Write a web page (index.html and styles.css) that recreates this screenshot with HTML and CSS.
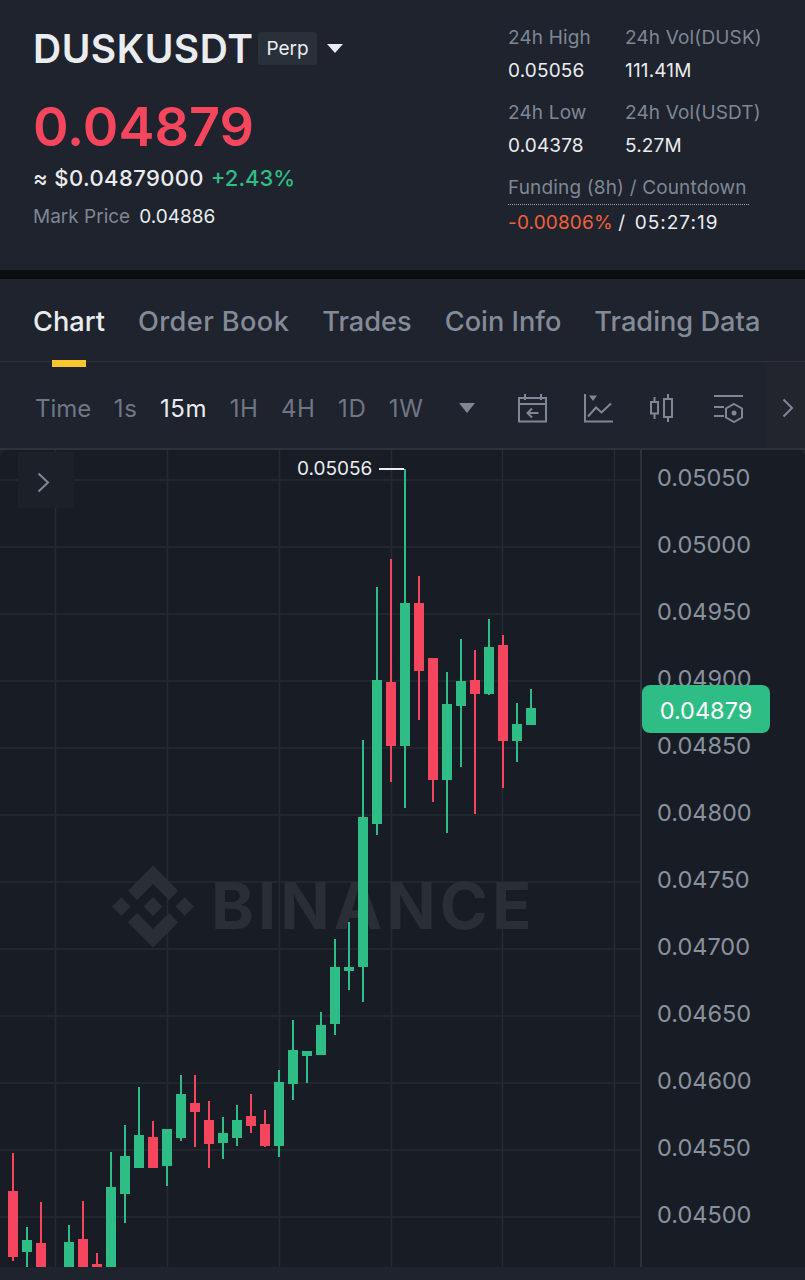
FILE: index.html
```html
<!DOCTYPE html>
<html lang="en">
<head>
  <meta charset="UTF-8" />
  <title>DUSKUSDT Perp</title>
  <link rel="stylesheet" href="styles.css">
</head>
<body>
  <header class="ticker">
    <div class="ticker-main">
      <div class="symbol-row">
        <span class="symbol">DUSKUSDT</span>
        <span class="perp">Perp</span>
        <span class="symbol-caret"></span>
      </div>
      <div class="last-price">0.04879</div>
      <div class="fiat-row"><span class="fiat">≈ $0.04879000</span> <span class="change">+2.43%</span></div>
      <div class="mark-row"><span class="muted">Mark Price</span><span>0.04886</span></div>
    </div>
    <div class="ticker-stats">
      <div class="stat-grid">
        <div class="stat"><div class="muted">24h High</div><div>0.05056</div></div>
        <div class="stat"><div class="muted">24h Vol(DUSK)</div><div>111.41M</div></div>
        <div class="stat"><div class="muted">24h Low</div><div>0.04378</div></div>
        <div class="stat"><div class="muted">24h Vol(USDT)</div><div>5.27M</div></div>
      </div>
      <div class="funding-label muted">Funding (8h) / Countdown</div>
      <div class="funding-value"><span class="funding-rate">-0.00806%</span> / <span class="funding-time">05:27:19</span></div>
    </div>
  </header>

  <nav class="tabs">
    <a class="tab active">Chart</a>
    <a class="tab">Order Book</a>
    <a class="tab">Trades</a>
    <a class="tab">Coin Info</a>
    <a class="tab">Trading Data</a>
  </nav>

  <div class="toolbar">
    <div class="intervals">
      <span>Time</span>
      <span>1s</span>
      <span class="current">15m</span>
      <span>1H</span>
      <span>4H</span>
      <span>1D</span>
      <span>1W</span>
    </div>
    <span class="interval-caret"></span>
    <div class="tools">
      <svg width="30" height="30" viewBox="0 0 30 30" class="tool">
        <rect x="1" y="5" width="27" height="23.5" />
        <path d="M1 11h27M7 1v6M23 1v6M20.5 20h-11M14 15.5 9.5 20l4.5 4.5" />
      </svg>
      <svg width="30" height="30" viewBox="0 0 30 30" class="tool">
        <path d="M2 1v27.5h28M5 23.5l8-9 5.5 5 9.500-9" />
        <path class="tool-fill" d="M6 2.500h8l-4 5.500z" />
      </svg>
      <svg width="30" height="30" viewBox="0 0 30 30" class="tool">
        <rect x="3" y="9" width="7" height="11.500" />
        <rect x="16" y="6" width="8" height="18" />
        <path d="M6.500 4v5M6.500 20.500V26M20 1v5M20 24v5" />
      </svg>
      <svg width="30" height="30" viewBox="0 0 30 30" class="tool">
        <path d="M1 3h29M1 14h10M1 23h10" />
        <path d="M21 11l8 4.500v9L21 29l-8-4.500v-9z" />
        <circle class="tool-fill" cx="21" cy="20" r="2.500" />
      </svg>
    </div>
    <div class="tools-more">
      <svg width="12" height="20" viewBox="0 0 12 20" class="tool">
        <path d="M1.500 1.500 10 10l-8.500 8.500" />
      </svg>
    </div>
  </div>

  <section class="chart">
    <svg class="plot" width="640" height="817" viewBox="0 450 640 817">
      <g id="grid"></g>
      <g class="watermark">
        <g transform="translate(112 865.500) scale(0.648)">
          <path d="M38.730 53.200l24.590-24.580 24.600 24.600 14.300-14.310L63.320 0 24.430 38.900z" />
          <path d="M0 63.310l14.300-14.310 14.310 14.310-14.310 14.300z" />
          <path d="M38.730 73.410L63.320 98l24.600-24.600 14.310 14.290-38.900 38.910-38.910-38.880z" />
          <path d="M98 63.310l14.300-14.310 14.310 14.300-14.310 14.320z" />
          <path d="M77.830 63.300L63.320 48.780 48.810 63.280l14.510 14.500z" />
        </g>
        <text x="211" y="929">BINANCE</text>
      </g>
      <g id="candles"></g>
    </svg>

    <div class="axis">
      <span>0.05050</span>
      <span>0.05000</span>
      <span>0.04950</span>
      <span>0.04900</span>
      <span>0.04850</span>
      <span>0.04800</span>
      <span>0.04750</span>
      <span>0.04700</span>
      <span>0.04650</span>
      <span>0.04600</span>
      <span>0.04550</span>
      <span>0.04500</span>
    </div>

    <button class="drawer-toggle">
      <svg width="13" height="21" viewBox="0 0 13 21" class="tool">
        <path d="M1.500 1.500 11 10.500l-9.500 9" />
      </svg>
    </button>
    <div class="high-mark">0.05056<span class="high-line"></span></div>
    <div class="price-tag">0.04879</div>
  </section>

  <script src="chart.js"></script>
</body>
</html>
```

FILE: styles.css
```css
body {
  margin: 0;
  height: 1280px;
  overflow: hidden;
  font-family: Inter, "Liberation Sans", sans-serif;
  background-color: #1e232d;
  color: #eaecef;
}

.muted {
  color: #7f8794;
}

/* ticker header */
.ticker {
  display: flex;
  justify-content: space-between;
  height: 270px;
  box-sizing: border-box;
  padding: 0 44px 0 33px;
}

.symbol-row {
  display: flex;
  align-items: center;
  margin-top: 29px;
  height: 38px;
}

.symbol {
  font-size: 39px;
  font-weight: 600;
  letter-spacing: 0.5px;
}

.perp {
  margin-left: 5px;
  padding: 0 8px;
  height: 33px;
  line-height: 33px;
  font-size: 19px;
  background-color: #2a303a;
  border-radius: 3px;
}

.symbol-caret {
  margin-left: 10px;
  border-left: 8px solid transparent;
  border-right: 8px solid transparent;
  border-top: 9px solid #eaecef;
}

.last-price {
  margin-top: 27px;
  font-size: 54px;
  line-height: 66px;
  font-weight: 600;
  color: #f6465d;
}

.fiat-row {
  margin-top: 3px;
  font-size: 22px;
  line-height: 30px;
  font-weight: 500;
}

.fiat {
  letter-spacing: 0.4px;
}

.change {
  margin-left: 1px;
  color: #2ebd85;
}

.mark-row {
  display: flex;
  gap: 9px;
  margin-top: 11px;
  font-size: 19px;
  line-height: 26px;
}

.ticker-stats {
  width: 253px;
  padding-top: 25px;
  font-size: 19px;
  line-height: 26px;
  letter-spacing: 0.15px;
  white-space: nowrap;
}

.stat-grid {
  display: grid;
  grid-template-columns: 117px 136px;
  row-gap: 16px;
}

.stat div + div {
  margin-top: 7px;
}

.funding-label {
  margin-top: 16px;
  width: 241px;
  padding-bottom: 3px;
  border-bottom: 1px dotted #a0a6b0;
}

.funding-value {
  margin-top: 5px;
}

.funding-rate {
  color: #f0603c;
}

.funding-time {
  margin-left: 4px;
  letter-spacing: 1px;
}

/* tabs */
.tabs {
  display: flex;
  gap: 33px;
  height: 83px;
  box-sizing: border-box;
  margin-top: 9px;
  padding: 0 33px;
  border-bottom: 1px solid #2d323c;
}

.ticker + .tabs {
  box-shadow: 0 -9px 0 #0b0e11;
}

.tab {
  position: relative;
  font-size: 27.2px;
  font-weight: 500;
  line-height: 86px;
  color: #848b98;
  white-space: nowrap;
}

.tab:nth-child(2) {
  letter-spacing: 0.4px;
}

.tab.active {
  color: #eaecef;
}

.tab.active::after {
  content: "";
  position: absolute;
  left: 19px;
  width: 34px;
  top: 81px;
  height: 7px;
  background-color: #f6c82e;
}

/* toolbar */
.toolbar {
  display: flex;
  align-items: center;
  height: 88px;
  box-sizing: border-box;
  padding: 6px 0 0 35px;
  border-bottom: 2px solid #2d323c;
}

.intervals {
  display: flex;
  gap: 22.5px;
  font-size: 24px;
  letter-spacing: 0.6px;
  color: #6f7785;
}

.intervals span:first-child {
  letter-spacing: 0;
}

.intervals .current {
  color: #eaecef;
}

.interval-caret {
  margin-left: 36px;
  border-left: 8px solid transparent;
  border-right: 8px solid transparent;
  border-top: 10px solid #7f8796;
}

.tools {
  display: flex;
  gap: 35px;
  margin-left: 43px;
}

.tool {
  fill: none;
  stroke: #7f8796;
  stroke-width: 2;
}

.tool-fill {
  fill: #7f8796;
  stroke: none;
}

.tools-more {
  display: flex;
  align-items: center;
  justify-content: center;
  align-self: stretch;
  box-sizing: border-box;
  margin-top: -6px;
  margin-left: auto;
  padding: 6px 0 0 4px;
  width: 38px;
  background-color: #22252e;
}

/* chart */
.chart {
  position: relative;
  display: flex;
  height: 817px;
  background-color: #181d25;
  border-radius: 8px 8px 0 0;
  overflow: hidden;
}

.plot {
  flex: none;
  display: block;
}

.grid-line {
  stroke: #262a33;
  stroke-width: 1.500;
}

.watermark {
  fill: #2a2e37;
}

.watermark text {
  font-family: Inter, "Liberation Sans", sans-serif;
  font-size: 65px;
  font-weight: 700;
  letter-spacing: 4px;
}

.candle-up {
  fill: #2ebd85;
}

.candle-down {
  fill: #f6465d;
}

.axis {
  display: flex;
  flex-direction: column;
  margin-top: -6px;
  padding-left: 15px;
  border-left: 2px solid #2d323c;
  font-size: 23.5px;
  color: #8a919e;
}

.axis span {
  flex: none;
  height: 67px;
  line-height: 67px;
}

.drawer-toggle {
  position: absolute;
  left: 18px;
  top: 2px;
  width: 56px;
  height: 56px;
  padding: 4px 6px 0 0;
  border: none;
  background-color: #1c2129;
}

.drawer-toggle svg {
  display: block;
  margin: auto;
}

.high-mark {
  position: absolute;
  left: 297px;
  top: 7px;
  display: flex;
  align-items: center;
  gap: 7px;
  font-size: 19px;
  line-height: 24px;
  color: #eaecef;
}

.high-line {
  width: 25px;
  height: 2px;
  background-color: #eaecef;
}

.price-tag {
  position: absolute;
  left: 642px;
  top: 235px;
  width: 128px;
  height: 48px;
  line-height: 52px;
  text-align: center;
  font-size: 23.5px;
  color: #fff;
  background-color: #2ebd85;
  border-radius: 8px;
}
```

FILE: chart.js
```js
const NS = "http://www.w3.org/2000/svg";

// [slot, wick top, body top, body bottom, wick bottom, up]
const candles = [
  [0, 1153, 1191, 1257, 1261, 0],
  [1, 1227, 1240, 1252, 1267, 1],
  [2, 1202, 1243, 1280, 1280, 0],
  [4, 1225, 1242, 1280, 1280, 1],
  [5, 1201, 1239, 1280, 1280, 0],
  [6, 1253, 1264, 1280, 1280, 0],
  [7, 1152, 1187, 1280, 1280, 1],
  [8, 1125, 1156, 1194, 1223, 1],
  [9, 1087, 1135, 1168, 1168, 1],
  [10, 1121, 1137, 1168, 1168, 0],
  [11, 1129, 1129, 1166, 1186, 1],
  [12, 1075, 1094, 1138, 1141, 1],
  [13, 1075, 1103, 1112, 1147, 0],
  [14, 1101, 1120, 1144, 1168, 0],
  [15, 1117, 1133, 1143, 1159, 1],
  [16, 1105, 1120, 1138, 1146, 1],
  [17, 1094, 1116, 1126, 1133, 0],
  [18, 1110, 1124, 1146, 1147, 0],
  [19, 1070, 1082, 1146, 1157, 1],
  [20, 1020, 1050, 1084, 1100, 1],
  [21, 1051, 1051, 1056, 1083, 1],
  [22, 1012, 1025, 1055, 1055, 1],
  [23, 939, 967, 1024, 1035, 1],
  [24, 922, 967, 971, 990, 1],
  [25, 740, 817, 967, 1002, 1],
  [26, 587, 680, 824, 835, 1],
  [27, 559, 682, 746, 782, 0],
  [28, 469, 603, 746, 808, 1],
  [29, 576, 603, 671, 720, 0],
  [30, 658, 658, 780, 802, 0],
  [31, 672, 704, 780, 833, 1],
  [32, 639, 681, 706, 767, 1],
  [33, 650, 680, 694, 814, 0],
  [34, 619, 647, 694, 695, 1],
  [35, 635, 645, 741, 788, 0],
  [36, 703, 724, 741, 762, 1],
  [37, 689, 708, 725, 725, 1]
];

function addRect(parent, x, y, w, h, cls) {
  const r = document.createElementNS(NS, "rect");
  r.setAttribute("x", x);
  r.setAttribute("y", y);
  r.setAttribute("width", w);
  r.setAttribute("height", h);
  r.setAttribute("class", cls);
  parent.appendChild(r);
}

function addLine(parent, x1, y1, x2, y2) {
  const l = document.createElementNS(NS, "line");
  l.setAttribute("x1", x1);
  l.setAttribute("y1", y1);
  l.setAttribute("x2", x2);
  l.setAttribute("y2", y2);
  l.setAttribute("class", "grid-line");
  parent.appendChild(l);
}

const grid = document.getElementById("grid");
[55.5, 167.5, 279.5, 391.5, 502.5, 614.5].forEach((x) => addLine(grid, x, 450, x, 1267));
for (let y = 480; y < 1267; y += 67) {
  addLine(grid, 0, y, 640, y);
}

const group = document.getElementById("candles");
candles.forEach(([slot, wickTop, top, bottom, wickBottom, up]) => {
  const x = 13 + slot * 14;
  const cls = up ? "candle-up" : "candle-down";
  addRect(group, x - 1, wickTop, 2, wickBottom - wickTop, cls);
  addRect(group, x - 5, top, 10, bottom - top, cls);
});
```
